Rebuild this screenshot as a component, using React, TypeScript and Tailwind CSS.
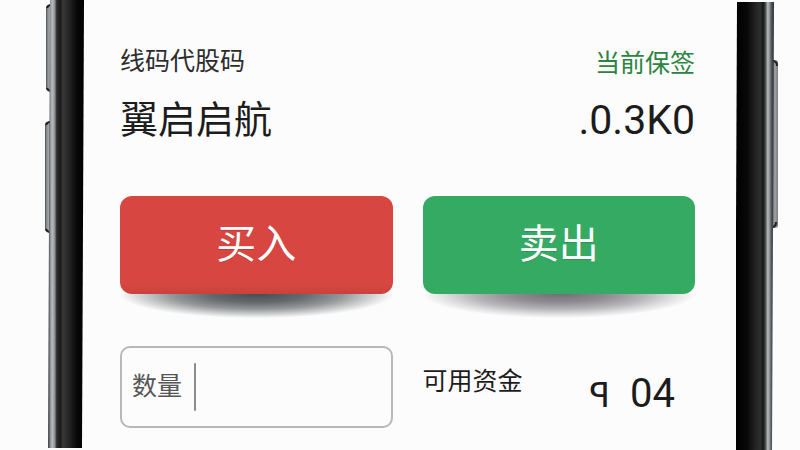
function LeftRail() {
  return (
    <svg className="h-full w-21 shrink-0" viewBox="0 0 84 450" preserveAspectRatio="none" aria-hidden="true">
      <defs>
        <linearGradient id="leftBody" x1="0" x2="1" y1="0" y2="0">
          <stop offset="0" stopColor="#3c3f41" />
          <stop offset="0.05" stopColor="#6f7476" />
          <stop offset="0.08" stopColor="#a4a8aa" />
          <stop offset="0.13" stopColor="#b4b8b9" />
          <stop offset="0.19" stopColor="#8a8e90" />
          <stop offset="0.24" stopColor="#2e3031" />
          <stop offset="0.34" stopColor="#1b1b1b" />
          <stop offset="0.42" stopColor="#383838" />
          <stop offset="0.6" stopColor="#222222" />
          <stop offset="0.8" stopColor="#080808" />
          <stop offset="1" stopColor="#000000" />
        </linearGradient>
        <linearGradient id="leftKey" x1="0" x2="1" y1="0" y2="0">
          <stop offset="0" stopColor="#4a4d50" />
          <stop offset="0.3" stopColor="#8e9295" />
          <stop offset="0.6" stopColor="#a2a6a8" />
          <stop offset="1" stopColor="#55585a" />
        </linearGradient>
      </defs>
      <rect x="46" y="5" width="6" height="86" rx="3" fill="url(#leftKey)" />
      <rect x="45" y="122" width="6" height="110" rx="3" fill="url(#leftKey)" />
      <path d="M47 8q1-3 4-3M47 88q1 3 4 3M46 125q1-3 4-3M46 229q1 3 4 3" fill="none" stroke="#1d1f20" strokeWidth="2" />
      <path d="M50 0H84L82 448H48Z" fill="url(#leftBody)" />
    </svg>
  );
}

function RightRail() {
  return (
    <svg className="h-full w-16 shrink-0" viewBox="0 0 64 450" preserveAspectRatio="none" aria-hidden="true">
      <defs>
        <linearGradient id="rightBody" x1="0" x2="1" y1="0" y2="0">
          <stop offset="0" stopColor="#000000" />
          <stop offset="0.3" stopColor="#070707" />
          <stop offset="0.55" stopColor="#262626" />
          <stop offset="0.66" stopColor="#2e2e2e" />
          <stop offset="0.72" stopColor="#141414" />
          <stop offset="0.78" stopColor="#4a4c4d" />
          <stop offset="0.84" stopColor="#b9bcbd" />
          <stop offset="0.88" stopColor="#94979a" />
          <stop offset="0.93" stopColor="#55595c" />
          <stop offset="1" stopColor="#2b2d2f" />
        </linearGradient>
        <linearGradient id="rightKey" x1="0" x2="1" y1="0" y2="0">
          <stop offset="0" stopColor="#55585a" />
          <stop offset="0.5" stopColor="#a2a6a8" />
          <stop offset="1" stopColor="#77797c" />
        </linearGradient>
      </defs>
      <rect x="36" y="60" width="6" height="168" rx="3" fill="url(#rightKey)" />
      <path d="M37 61q4 0 4 5M36 227q4 0 4-5" fill="none" stroke="#1d1f20" strokeWidth="2" />
      <path d="M1 2H38L36 450H-1Z" fill="url(#rightBody)" />
    </svg>
  );
}

export default function App() {
  return (
    <div className="flex h-screen overflow-hidden bg-[#fcfcfc] font-['Roboto','Noto_Sans_CJK_SC',sans-serif] text-[#1c1c1c]">
      <LeftRail />
      <main className="min-w-0 flex-1 pt-11 pr-[41px] pl-9">
        <header className="flex justify-between">
          <div>
            <p className="text-[25px] leading-9 text-[#2c2c2c]">线码代股码</p>
            <h1 className="text-[38px] leading-20">翼启启航</h1>
          </div>
          <div className="text-right">
            <p className="text-[25px] leading-10 text-[#2b8440]">当前保签</p>
            <p className="text-[41px] leading-[72px]">.0.3K0</p>
          </div>
        </header>

        <div className="mt-9 grid grid-cols-2 gap-x-[30px]">
          <div>
            <button
              type="button"
              className="block h-[98px] w-full rounded-xl bg-[linear-gradient(#d74641_90%,#c9423d)] text-[40px] text-white text-shadow-2xs"
            >
              买入
            </button>
            <div className="h-6 bg-[radial-gradient(ellipse_at_top,#3c4145f0_0%,#3c4145c8_25%,#3c414588_45%,#3c41453a_60%,transparent_71%)]" />
          </div>
          <div>
            <button
              type="button"
              className="block h-[98px] w-full rounded-xl bg-[#34aa62] text-[40px] text-white text-shadow-2xs"
            >
              卖出
            </button>
            <div className="h-6 bg-[radial-gradient(ellipse_at_top,#5d5a62e0_0%,#5d5a62b0_25%,#5d5a6270_45%,#5d5a622c_60%,transparent_71%)]" />
          </div>
        </div>

        <div className="mt-7 grid grid-cols-2 gap-x-[30px]">
          <div className="flex h-[82px] items-center rounded-[10px] border-2 border-[#b8b8b8] px-2.5">
            <label htmlFor="quantity" className="text-[25px] text-[#555555]">数量</label>
            <span className="ml-3 h-12 w-0.5 shrink-0 rounded-full bg-[#8c8c8c]" />
            <input id="quantity" type="text" className="ml-1 h-12 min-w-0 flex-1 bg-transparent text-[25px] outline-none" />
          </div>
          <div className="flex justify-between pr-5">
            <span className="pt-4 text-[25px] leading-10">可用资金</span>
            <span className="flex items-baseline gap-5 pt-6 leading-12">
              <span className="font-['DejaVu_Sans',sans-serif] text-[34px]">ꟼ</span>
              <span className="text-[40px]">04</span>
            </span>
          </div>
        </div>
      </main>
      <RightRail />
    </div>
  );
}
